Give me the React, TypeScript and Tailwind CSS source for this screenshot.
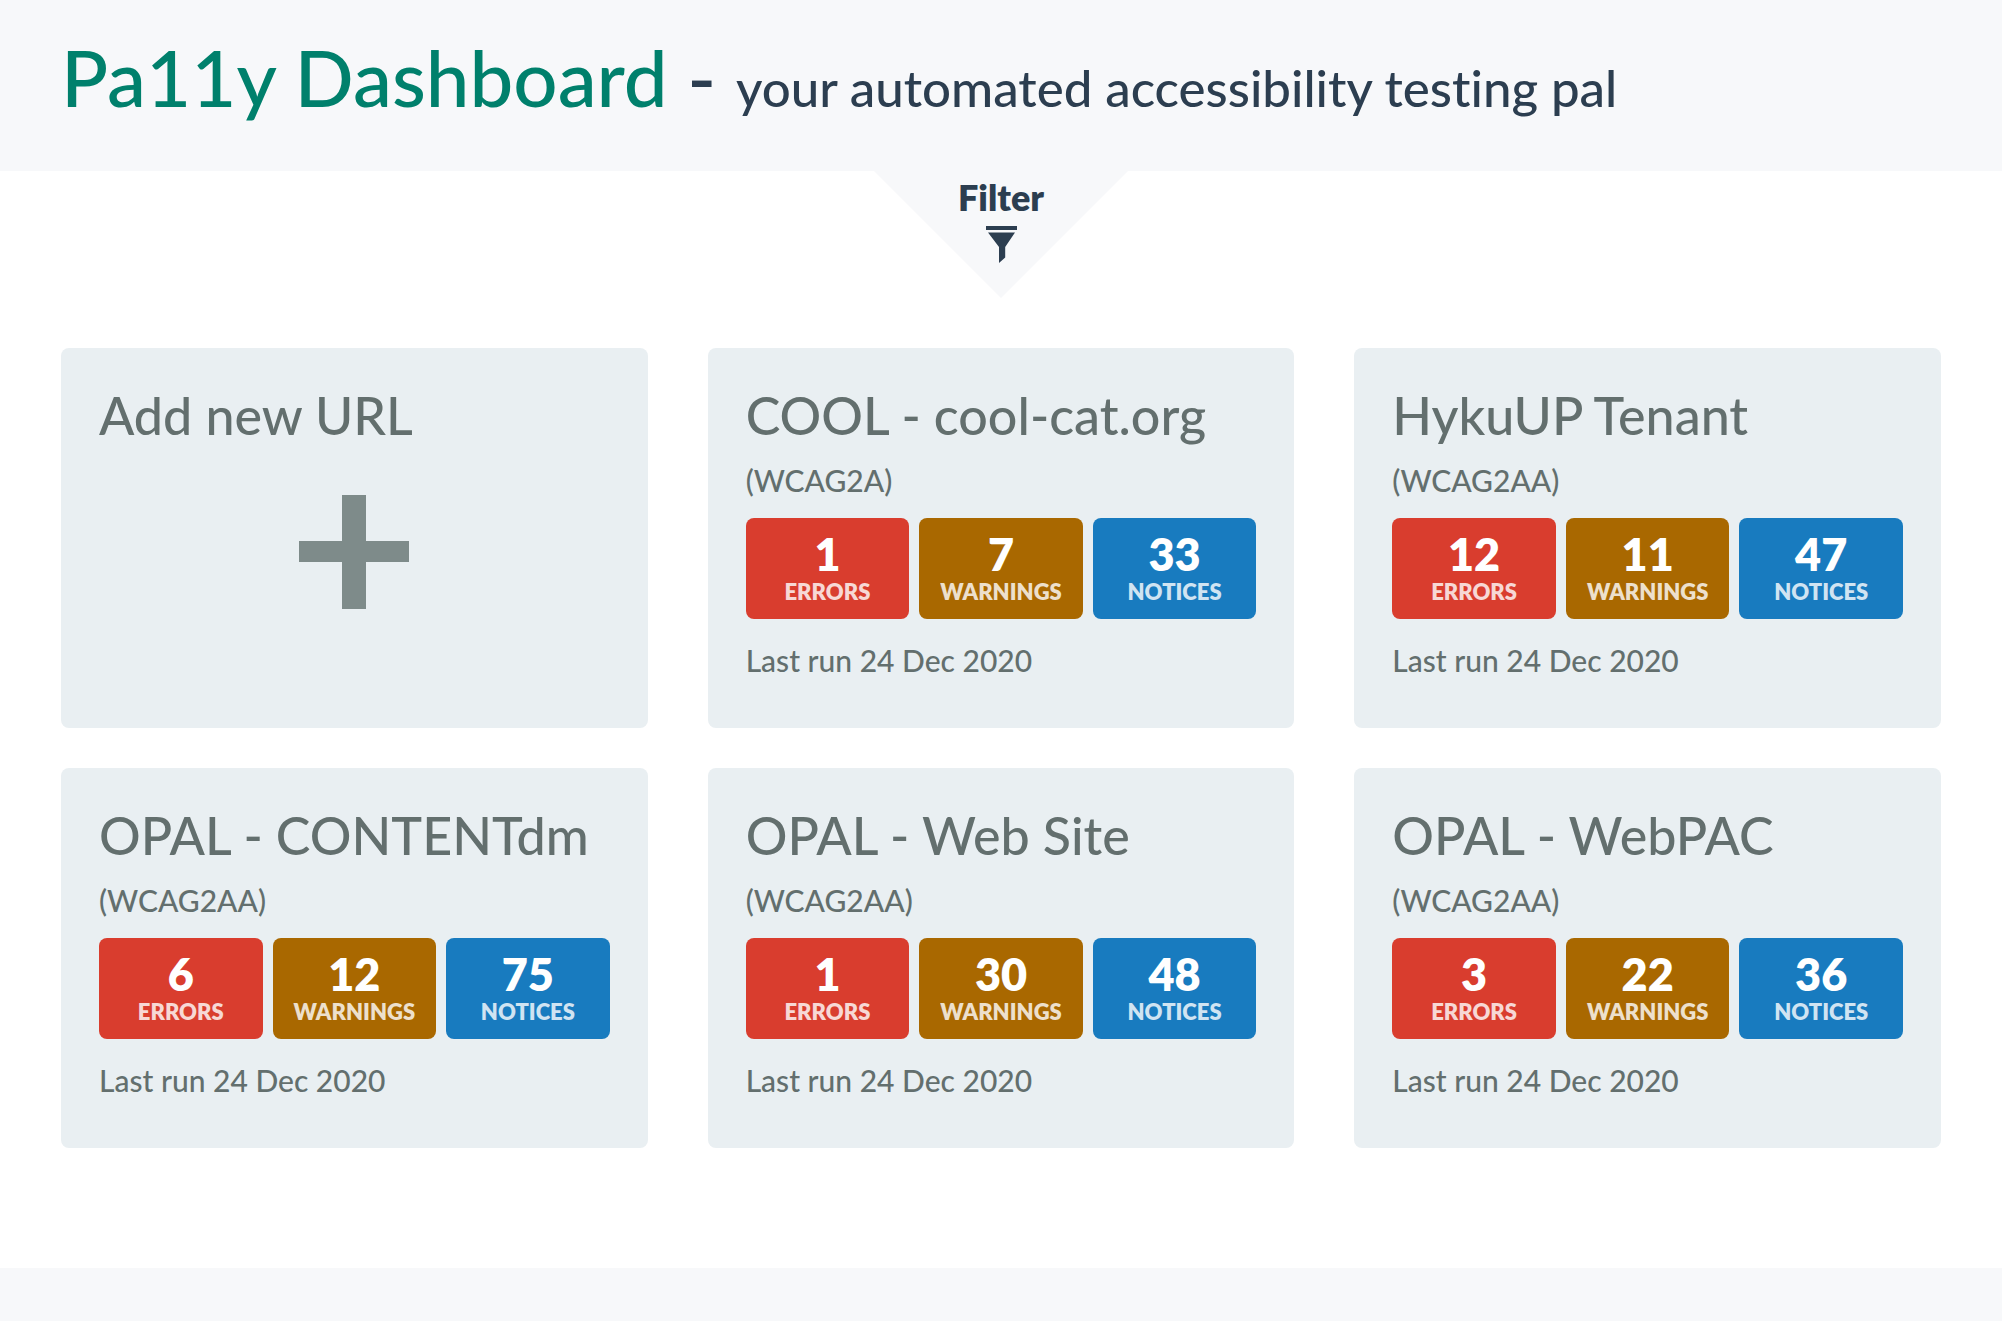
type Site = {
  name: string;
  standard: string;
  errors: number;
  warnings: number;
  notices: number;
  lastRun: string;
};

const sites: Site[] = [
  { name: "COOL - cool-cat.org", standard: "WCAG2A", errors: 1, warnings: 7, notices: 33, lastRun: "24 Dec 2020" },
  { name: "HykuUP Tenant", standard: "WCAG2AA", errors: 12, warnings: 11, notices: 47, lastRun: "24 Dec 2020" },
  { name: "OPAL - CONTENTdm", standard: "WCAG2AA", errors: 6, warnings: 12, notices: 75, lastRun: "24 Dec 2020" },
  { name: "OPAL - Web Site", standard: "WCAG2AA", errors: 1, warnings: 30, notices: 48, lastRun: "24 Dec 2020" },
  { name: "OPAL - WebPAC", standard: "WCAG2AA", errors: 3, warnings: 22, notices: 36, lastRun: "24 Dec 2020" },
];

const cardClass = "block min-h-[380px] rounded-lg bg-[#e9eff2] px-[38px] pt-[39px] pb-12 text-[#636f6e]";
const cardTitleClass = "text-[52px] leading-[57px]";

function Stat({ value, label, className }: { value: number; label: string; className: string }) {
  return (
    <li className={`rounded-lg pt-[13px] pb-3 text-center font-extrabold text-white ${className}`}>
      <div className="text-[45px] leading-[46px]">{value}</div>
      <div className="text-[22px] leading-[30px] uppercase opacity-80">{label}</div>
    </li>
  );
}

function SiteCard({ site }: { site: Site }) {
  return (
    <a href="#site" className={cardClass}>
      <h2 className={cardTitleClass}>{site.name}</h2>
      <p className="mt-4 text-[30px] leading-10">({site.standard})</p>
      <ul className="mt-[18px] grid grid-cols-3 gap-[10px]">
        <Stat value={site.errors} label="Errors" className="bg-[#d93d2e]" />
        <Stat value={site.warnings} label="Warnings" className="bg-[#a96800]" />
        <Stat value={site.notices} label="Notices" className="bg-[#187bbf]" />
      </ul>
      <p className="mt-[21px] text-[30px] leading-10">Last run {site.lastRun}</p>
    </a>
  );
}

function FunnelIcon() {
  return (
    <svg className="mt-[9px] h-[37px] w-[31px]" viewBox="0 0 31 37" fill="currentColor" aria-hidden="true">
      <path d="M0 0h31v4H0zM2 6.500h27L19.200 21v10.500L13 37V21z" />
    </svg>
  );
}

export default function App() {
  return (
    <div className="flex min-h-screen flex-col bg-white font-['Lato',sans-serif] font-medium text-[#2c3e50] [font-variant-ligatures:none]">
      <header className="bg-[#f7f8fa] px-[61px] pt-[33px] pb-[50px]">
        <h1 className="text-[78px] leading-[88px]">
          <a href="#home" className="text-[#00806c]">Pa11y Dashboard</a>
          {" - "}
          <span className="text-[51px] leading-none">your automated accessibility testing pal</span>
        </h1>
      </header>

      <main className="flex-1 pb-[120px]">
        <button
          type="button"
          className="mx-auto flex h-[127px] w-[254px] flex-col items-center bg-[#f7f8fa] pt-[6px] [clip-path:polygon(0_0,100%_0,50%_100%)]"
        >
          <span className="text-[36px] leading-10 font-extrabold">Filter</span>
          <FunnelIcon />
        </button>

        <div className="mt-[50px] grid grid-cols-3 gap-x-[60px] gap-y-10 px-[61px]">
          <a href="#new" className={cardClass}>
            <h2 className={cardTitleClass}>Add new URL</h2>
            <svg className="mx-auto mt-[51px] h-[114px] w-[110px]" viewBox="0 0 110 114" fill="#7e8b8a" aria-hidden="true">
              <path d="M43 0h24v46h43v21H67v47H43V67H0V46h43z" />
            </svg>
          </a>
          {sites.map((site) => (
            <SiteCard key={site.name} site={site} />
          ))}
        </div>
      </main>

      <footer className="h-[53px] bg-[#f7f8fa]" />
    </div>
  );
}
